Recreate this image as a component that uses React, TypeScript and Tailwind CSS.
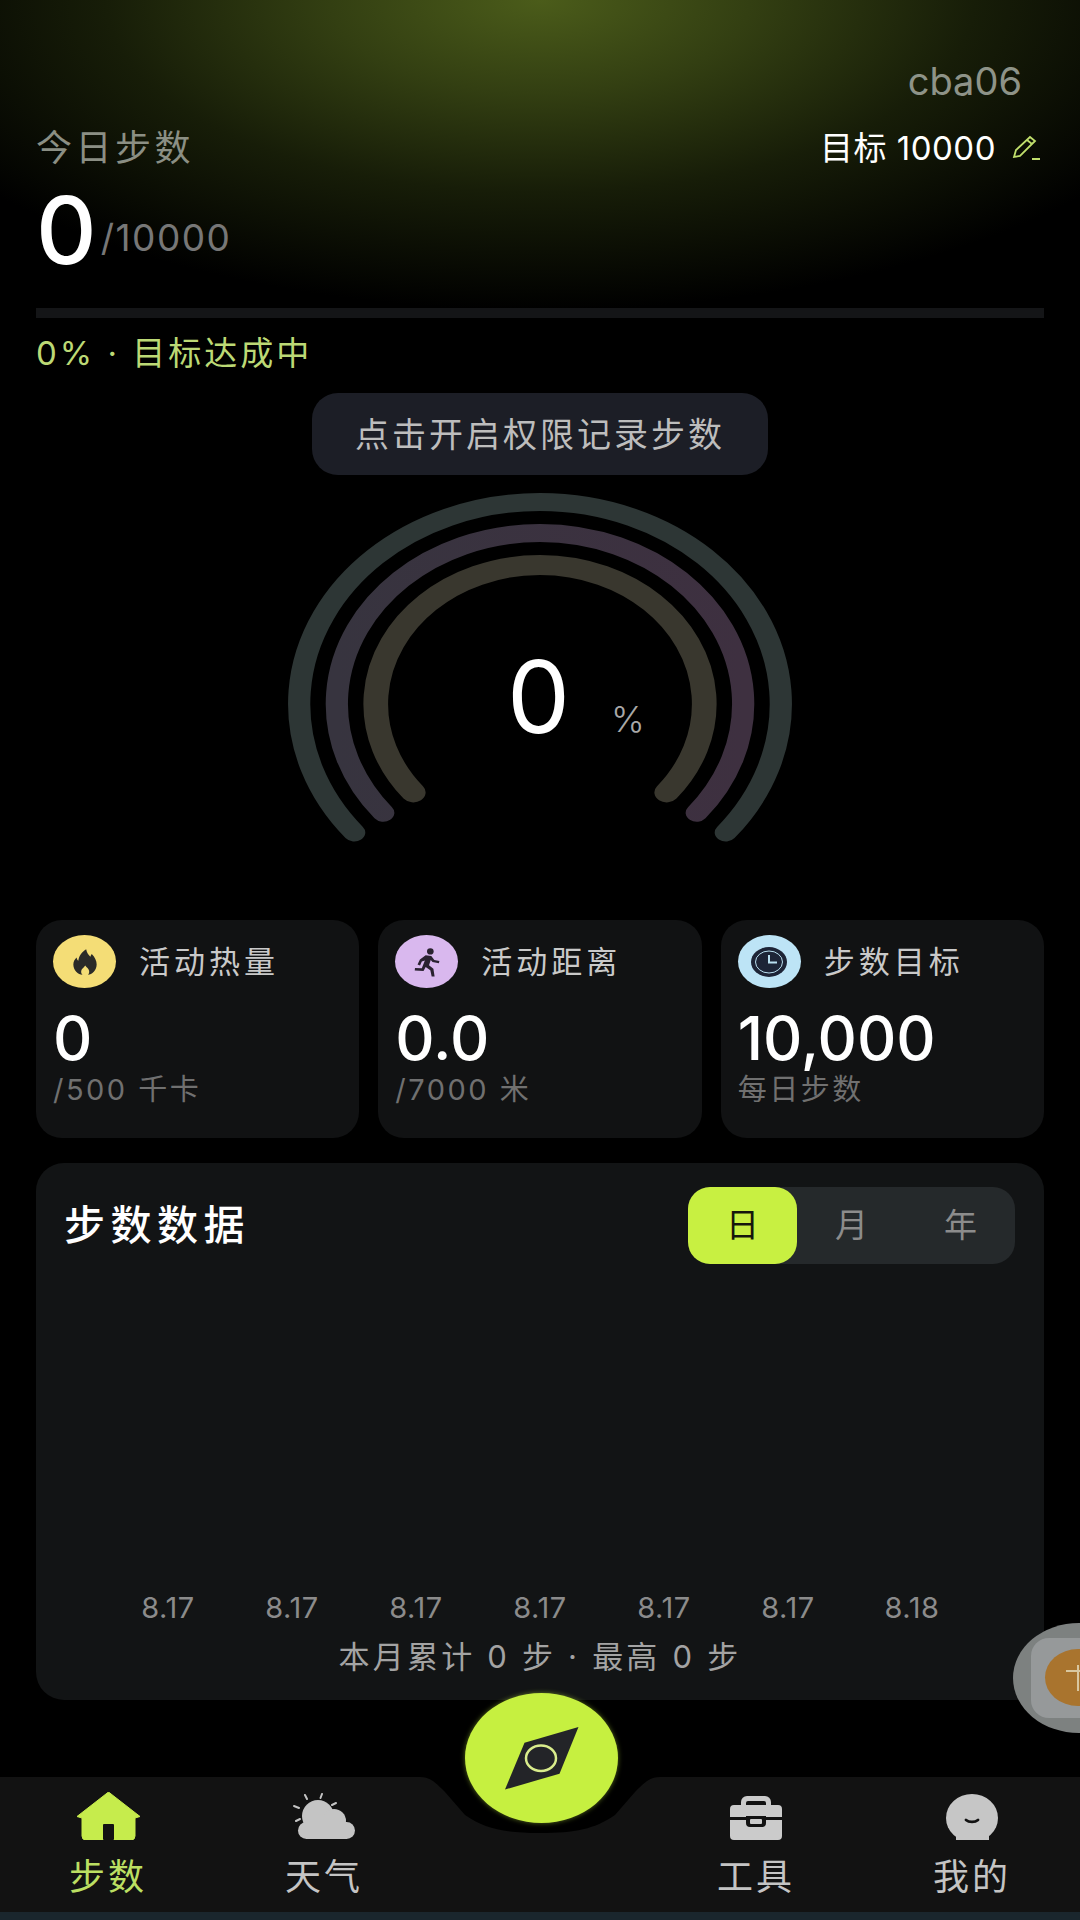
const FONT = "font-['Inter','Noto_Sans_CJK_SC',sans-serif]";

function arcPath(rx: number, ry: number, deg: number) {
  const a = (deg * Math.PI) / 180;
  const dx = rx * Math.cos(a);
  const dy = ry * Math.sin(a);
  return `M ${-dx} ${dy} A ${rx} ${ry} 0 1 1 ${dx} ${dy}`;
}

function Gauge() {
  return (
    <div className="relative mx-auto mt-[9px] h-[370px] w-[520px]">
      <svg viewBox="0 0 520 370" className="block h-full w-full">
        <defs>
          <linearGradient id="mid" x1="0" x2="1" y1="0" y2="0">
            <stop offset="0" stopColor="#37343f" />
            <stop offset="1" stopColor="#3e3040" />
          </linearGradient>
        </defs>
        {/* arc centre sits at 540,704 on the page */}
        <g transform="translate(260 220) scale(1.235 1)" fill="none" strokeLinecap="round">
          <path d={arcPath(195, 202, 39.5)} stroke="#2d3635" strokeWidth="18" />
          <path d={arcPath(164.5, 171, 39.5)} stroke="url(#mid)" strokeWidth="18" />
          <path d={arcPath(133, 139, 39.5)} stroke="#39372e" strokeWidth="20" />
        </g>
      </svg>
      <div className="absolute left-[227px] top-[163px] text-[100px] leading-none text-white">0</div>
      <div className="absolute left-[331px] top-[217px] text-[36px] font-light leading-none text-[#a8a8a8]">%</div>
    </div>
  );
}

function FlameIcon() {
  return (
    <svg viewBox="0 0 24 24" className="h-[28px] w-[28px]" preserveAspectRatio="none">
      <path
        d="M13 1c.6 3.4 2 4.600 3.600 6.400.3-1 .6-1.600 1.200-2.300C20.600 8 22 11 22 14.200c0 5-4 8.800-7.500 8.800.9-1 1.300-2.200 1-3.600-.4-1.700-2-2.600-3.300-4.400-1.300 1.800-3 2.800-3.400 4.400-.3 1.400.1 2.600 1.100 3.600C6 23 2 19.200 2 14.200c0-2.500 1.200-4.500 2.800-6 .2 1.300.7 2.200 1.500 2.800C6.500 7 9.500 3 13 1z"
        fill="#2a2a28"
      />
    </svg>
  );
}

function RunnerIcon() {
  return (
    <svg viewBox="0 0 24 24" className="h-[30px] w-[32px]" preserveAspectRatio="none" fill="#2a2230">
      <circle cx="14.500" cy="3.500" r="2.500" />
      <path d="M11 6.500l4.200.6 2.300 3.300 3.800.8-.4 1.800-4.800-1-1.300-1.600-1.300 4.200 3.300 2.700.9 6.200h-2.200l-1-5-3.500-2.600-1.600 3.200-6.600-.4.200-2 5.100.3 2.300-6.300-2.300.9-1.300 3.100-1.900-.8 1.800-4z" />
    </svg>
  );
}

function ClockIcon() {
  return (
    <svg viewBox="0 0 40 34" className="h-[34px] w-[40px]" fill="none">
      <ellipse cx="20" cy="17" rx="18" ry="15" fill="#1d2436" />
      <ellipse cx="20" cy="17" rx="13.500" ry="11" stroke="#b9dff0" strokeWidth="1" />
      <path d="M20 10v7.500h8" stroke="#b9dff0" strokeWidth="2" />
    </svg>
  );
}

type StatCardProps = {
  icon: React.ReactNode;
  iconBg: string;
  label: string;
  value: string;
  sub: string;
};

function StatCard({ icon, iconBg, label, value, sub }: StatCardProps) {
  return (
    <div className="h-[218px] flex-1 rounded-[26px] bg-[#111213] pl-[17px] pt-[15px]">
      <div className="flex items-center">
        <div className={`flex h-[53px] w-[63px] items-center justify-center rounded-[50%] ${iconBg}`}>{icon}</div>
        <div className="ml-[23px] text-[31px] leading-none tracking-[4px] text-[#c9c9c9]">{label}</div>
      </div>
      <div className="mt-[18px] text-[61px] font-medium leading-[64px] text-white">{value}</div>
      <div className="mt-[2px] text-[29px] leading-[36px] tracking-[2.500px] text-[#707070]">{sub}</div>
    </div>
  );
}

function HomeIcon() {
  return (
    <svg viewBox="0 0 63 48" className="h-[48px] w-[63px]">
      <path
        d="M31.500 0 63 24.500 58 26v18a4 4 0 0 1-4 4H9a4 4 0 0 1-4-4V26L0 24.500z"
        fill="#c6ec4c"
        stroke="#c6ec4c"
        strokeLinejoin="round"
      />
      <rect x="26" y="32" width="11" height="16" rx="1" fill="#121212" />
    </svg>
  );
}

function WeatherIcon() {
  return (
    <svg viewBox="0 0 62 47" className="h-[47px] w-[62px]" fill="#c4c4c4">
      <circle cx="25" cy="23" r="16" />
      <circle cx="41" cy="28" r="12" />
      <rect x="5" y="29" width="57" height="17" rx="8.500" />
      <path
        d="M12 2l2 4M29 1l-1.500 4M43 10l-4 2M1 13l5 2M3 28l4-2"
        stroke="#c4c4c4"
        strokeWidth="2"
        strokeLinecap="round"
        fill="none"
      />
    </svg>
  );
}

function ToolboxIcon() {
  return (
    <svg viewBox="0 0 52 45" className="h-[45px] w-[52px]" fill="#cbcbcb">
      <path d="M11 12V7a6 6 0 0 1 6-6h18a6 6 0 0 1 6 6v5h-5V8a2 2 0 0 0-2-2H18a2 2 0 0 0-2 2v4z" />
      <path d="M4 10h44a4 4 0 0 1 4 4v8H36v-1H16v1H0v-8a4 4 0 0 1 4-4z" />
      <path d="M0 25h16v3a4 4 0 0 0 4 4h12a4 4 0 0 0 4-4v-3h16v16a4 4 0 0 1-4 4H4a4 4 0 0 1-4-4z" />
      <rect x="20" y="24" width="12" height="5" rx="1" />
    </svg>
  );
}

function FaceIcon() {
  return (
    <svg viewBox="0 0 52 46" className="h-[46px] w-[52px]">
      <ellipse cx="26" cy="24" rx="26" ry="24" fill="#c6c6c6" />
      <rect x="10" y="38" width="33" height="8" fill="#c6c6c6" />
      <path d="M20 26c3 2.500 9 2.500 12 0" stroke="#121212" strokeWidth="2.800" strokeLinecap="round" fill="none" />
    </svg>
  );
}

function NavItem({ icon, label, active }: { icon: React.ReactNode; label: string; active?: boolean }) {
  return (
    <div className="flex w-[216px] flex-col items-center">
      <div className="flex h-[50px] items-end">{icon}</div>
      <div className={`mt-[19px] text-[36px] leading-none tracking-[3px] ${active ? 'text-[#bbdf62]' : 'text-[#c4c4c4]'}`}>{label}</div>
    </div>
  );
}

function BottomNav() {
  return (
    <div className="absolute bottom-0 left-0 w-full">
      <div className="relative flex h-[135px] justify-between bg-[#121212] pt-[13px]">
        {/* notch under the centre button */}
        <svg viewBox="0 0 280 60" className="absolute left-[400px] top-0 h-[60px] w-[280px]">
          <path d="M20 0C30 0 35 5 45 15L65 38C85 52 105 56 140 56 175 56 195 52 215 38L235 15C245 5 250 0 260 0z" fill="#000" />
        </svg>
        <div className="relative flex">
          <NavItem icon={<HomeIcon />} label="步数" active />
          <NavItem icon={<WeatherIcon />} label="天气" />
        </div>
        <div className="relative flex">
          <NavItem icon={<ToolboxIcon />} label="工具" />
          <NavItem icon={<FaceIcon />} label="我的" />
        </div>
      </div>
      <div className="h-[8px] bg-[#1a262d]" />
    </div>
  );
}

function CompassButton() {
  return (
    <div className="absolute left-[465px] top-[1693px] flex h-[130px] w-[153px] items-center justify-center rounded-[50%] bg-[#c6f040] shadow-[0_0_5px_rgba(198,240,64,0.45)]">
      <svg viewBox="0 0 74 63" className="h-[63px] w-[74px]">
        <path d="M73.500 0 54.500 46.700 0 62.500 19.500 15.700z" fill="#232428" />
        <ellipse cx="36" cy="31.300" rx="15" ry="12.700" fill="none" stroke="#d9ec8c" strokeWidth="2.500" />
      </svg>
    </div>
  );
}

export default function App() {
  const dates = ['8.17', '8.17', '8.17', '8.17', '8.17', '8.17', '8.18'];
  return (
    <div className={`relative h-[1920px] w-[1080px] overflow-hidden bg-black ${FONT}`}>
      {/* olive glow at the top */}
      <div className="absolute left-0 top-0 h-[340px] w-full bg-[radial-gradient(ellipse_700px_310px_at_50%_0%,#4b5c1a_0%,#333f12_30%,#171d08_62%,#000000_100%)]" />

      <div className="relative px-[36px]">
        <div className="flex justify-end pr-[22px] pt-[60px] text-[38px] leading-[42px] text-[#8e9388]">cba06</div>

        <div className="mt-[24px] flex items-center justify-between">
          <div className="text-[36px] leading-[44px] tracking-[3.500px] text-[#8b8f84]">今日步数</div>
          <div className="flex items-center text-[33px] leading-[44px] tracking-[0.500px] text-white">
            <span>目标 10000</span>
            <svg viewBox="0 0 30 26" className="ml-[15px] mr-[3px] h-[26px] w-[30px]" fill="none" stroke="#c0df6c" strokeWidth="1.800">
              <path d="M3 22 5 15 19 2 24 6 9 21z" />
              <path d="M16 5l5 4M21 24h8" />
            </svg>
          </div>
        </div>

        <div className="mt-[14px] flex h-[92px] items-end">
          <span className="text-[94px] font-medium leading-[92px] text-white">0</span>
          <span className="mb-[18px] ml-[4px] text-[37px] leading-[40px] tracking-[1.500px] text-[#777777]">/10000</span>
        </div>

        <div className="mt-[32px] h-[10px] w-full bg-[#141517]" />

        <div className="mt-[17px] text-[33px] leading-[36px] tracking-[3px] text-[#bcd975]">0%&nbsp;·&nbsp;目标达成中</div>

        <div className="mt-[22px] flex justify-center">
          <div className="flex h-[82px] w-[456px] items-center justify-center rounded-[26px] bg-[#1c1e26] text-[34px] tracking-[3px] text-[#bdbdbd]">
            点击开启权限记录步数
          </div>
        </div>

        <Gauge />

        <div className="mt-[66px] flex gap-[19px]">
          <StatCard icon={<FlameIcon />} iconBg="bg-[#f4dd76]" label="活动热量" value="0" sub="/500 千卡" />
          <StatCard icon={<RunnerIcon />} iconBg="bg-[#d9b8ee]" label="活动距离" value="0.0" sub="/7000 米" />
          <StatCard icon={<ClockIcon />} iconBg="bg-[#bde4f6]" label="步数目标" value="10,000" sub="每日步数" />
        </div>

        <div className="mt-[25px] h-[537px] rounded-[28px] bg-[#121415]">
          <div className="flex items-center justify-between pl-[28px] pr-[29px] pt-[24px]">
            <div className="text-[41px] font-medium tracking-[5.500px] text-white">步数数据</div>
            <div className="flex h-[77px] w-[327px] rounded-[22px] bg-[#25292b] text-[33px] text-[#8c8c8c]">
              <div className="flex w-[109px] items-center justify-center rounded-[22px] bg-[#c8f041] text-[#15170c]">日</div>
              <div className="flex w-[109px] items-center justify-center">月</div>
              <div className="flex w-[109px] items-center justify-center">年</div>
            </div>
          </div>
          <div className="mt-[328px] flex px-[70px] text-[29px] leading-[32px] tracking-[0.500px] text-[#8b8b8b]">
            {dates.map((d, i) => (
              <div key={i} className="flex-1 text-center">{d}</div>
            ))}
          </div>
          <div className="mt-[15px] text-center text-[31px] leading-[36px] tracking-[3.200px] text-[#a3a3a3]">本月累计 0 步 · 最高 0 步</div>
        </div>
      </div>

      <BottomNav />
      <CompassButton />

      {/* floating ball at the right edge */}
      <div className="absolute left-[1013px] top-[1623px] h-[110px] w-[132px] rounded-[50%] bg-[#7d8180]">
        <div className="absolute left-[18px] top-[15px] h-[80px] w-[80px] rounded-[18px] bg-[#96999a]">
          <div className="absolute left-[14px] top-[11px] h-[57px] w-[66px] rounded-[50%] bg-[#a9742e]">
            <svg viewBox="0 0 20 30" className="absolute left-[21px] top-[14px] h-[30px] w-[20px]" fill="none" stroke="#d9c7a0" strokeWidth="2">
              <path d="M0 8h20M12 2v26" />
            </svg>
          </div>
        </div>
      </div>
    </div>
  );
}
